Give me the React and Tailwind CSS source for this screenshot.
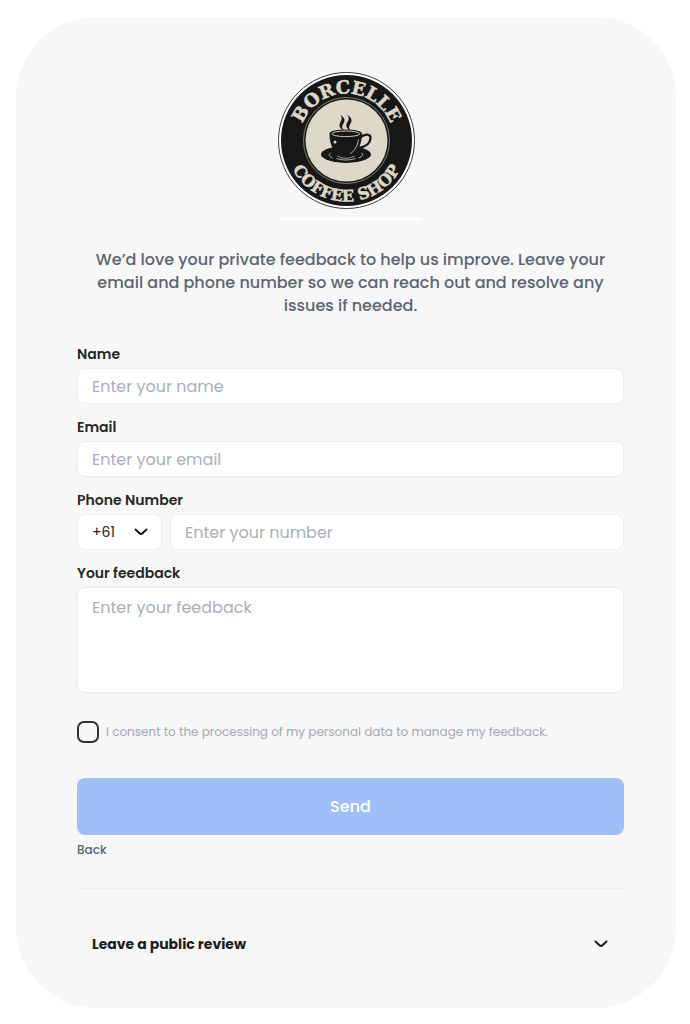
import { useState } from 'react'

const INPUT =
  'block w-full rounded-lg border border-[#ededee] bg-white px-3.5 text-base text-[#262827] placeholder:text-[#a9afb8] outline-none focus:border-[#a0bef8]'

const LABEL = 'block text-sm leading-5 font-semibold text-[#262827]'

function Logo() {
  return (
    <svg className="mx-auto block" width="148" height="150" viewBox="0 0 148 150" role="img" aria-label="Borcelle Coffee Shop">
      <defs>
        <path id="arc-top" d="M22.500 70.500 A47 47 0 0 1 116.500 70.500" />
        <path id="arc-bottom" d="M8.500 70.500 A61 61 0 0 0 130.500 70.500" />
      </defs>
      <circle cx="69.5" cy="70.5" r="68" fill="#fff" stroke="#393939" strokeWidth="1" />
      <circle cx="69.5" cy="70.5" r="65.5" fill="#171717" />
      <circle cx="69.5" cy="70.5" r="43" fill="none" stroke="#aaa698" strokeWidth="0.7" />
      <circle cx="69.5" cy="70.5" r="41" fill="#ded8c9" />

      <g fill="#ded8c9" stroke="#ded8c9" strokeWidth="0.5" fontFamily="'DejaVu Serif', serif" fontWeight="700" textAnchor="middle">
        <text fontSize="18">
          <textPath href="#arc-top" startOffset="50%">BORCELLE</textPath>
        </text>
        <text fontSize="16">
          <textPath href="#arc-bottom" startOffset="50%">COFFEE SHOP</textPath>
        </text>
      </g>

      {/* Steam */}
      <g fill="#171717">
        <path d="M63 44.5 C68 48 68.500 50 66.500 53.500 C64.500 56.500 65 58.500 67.500 61 C62 58 61.500 55.500 63.500 52 C65 49.500 65.500 47.500 63 44.500Z" />
        <path d="M69.500 44.500 C75 47.500 75.500 50.500 73.500 53.500 C71.500 56.500 72 58.500 73 60.500 C68.500 57.500 68.500 55 70.500 52 C72.500 49 72 47 69.500 44.500Z" />
      </g>

      {/* Saucer */}
      <ellipse cx="69" cy="84.500" rx="25" ry="8.500" fill="#171717" />
      <path d="M45.500 87.500 C53.500 95.500 84.500 95.500 92.500 87.500" fill="none" stroke="#ded8c9" strokeWidth="0.8" />
      <path d="M53.500 83 C51 85 52.500 86.500 55.500 88 M84.500 83 C87 84.500 85.500 86.500 81.500 88 M59.500 88.500 C65.500 90.500 72.500 90.500 78.500 88.500" fill="none" stroke="#ded8c9" strokeWidth="0.8" />

      {/* Cup */}
      <path d="M83.500 67.500 C87.500 63.500 94 63.500 93.500 68.500 C93 74 87.500 77 81.500 78" fill="none" stroke="#171717" strokeWidth="2.4" />
      <path d="M52.500 63.500 C52.500 58 85 58 85 63.500 C85 73 81.500 81 76.500 85 C72.500 88.200 64.500 88.200 61 85 C55.500 80 52.500 73 52.500 63.500Z" fill="#171717" />
      <ellipse cx="68.800" cy="63.800" rx="14" ry="2.800" fill="#171717" stroke="#ded8c9" strokeWidth="0.9" />
      <path d="M81.500 69.500 C80.500 76 77.500 81 73.500 83.500" fill="none" stroke="#ded8c9" strokeWidth="0.8" />
      <path d="M60.500 86 C65.500 89 72.500 89 77.500 86" fill="none" stroke="#ded8c9" strokeWidth="0.7" />
      <circle cx="58" cy="72" r="1.500" fill="#ded8c9" />

      <path d="M4 149 H144" stroke="#fff" strokeWidth="2" />
    </svg>
  )
}

function Chevron({ className }) {
  return (
    <svg className={className} width="14" height="8" viewBox="0 0 14 8" fill="none" stroke="#1b1d1c" strokeWidth="2" strokeLinecap="round" strokeLinejoin="round" aria-hidden="true">
      <path d="M1.500 1.500 L5.500 5.200 Q7 6.600 8.500 5.200 L12.500 1.500" />
    </svg>
  )
}

export default function App() {
  const [abierto, setAbierto] = useState(false)

  return (
    <div className="min-h-screen bg-white pt-[17px] pr-3.5 pb-4 pl-4 font-['Poppins','Inter',sans-serif]">
      <main className="rounded-[80px] bg-[#f7f7f7] pt-[53px] pr-[52px] pb-12 pl-[61px]">
        <Logo />

        <p className="mt-7 px-3 text-center text-base leading-[23px] font-medium text-[#5b6472]">
          We’d love your private feedback to help us improve. Leave your email and phone number so we can reach out and resolve any issues if needed.
        </p>

        {/* Form */}
        <form className="mt-[27px]" onSubmit={(e) => e.preventDefault()}>
          <div className="space-y-[13px]">
            <div>
              <label className={LABEL} htmlFor="name">Name</label>
              <input id="name" type="text" placeholder="Enter your name" className={`${INPUT} mt-1 h-9`} />
            </div>

            <div>
              <label className={LABEL} htmlFor="email">Email</label>
              <input id="email" type="email" placeholder="Enter your email" className={`${INPUT} mt-1 h-9`} />
            </div>

            <div>
              <label className={LABEL} htmlFor="phone">Phone Number</label>
              <div className="mt-1 flex gap-2">
                <div className="relative w-[85px] shrink-0">
                  <select aria-label="Country code" className="block h-9 w-full appearance-none rounded-lg border border-[#ededee] bg-white pl-3.5 text-sm text-[#262827] outline-none">
                    <option>+61</option>
                  </select>
                  <Chevron className="pointer-events-none absolute top-3.5 right-3.5" />
                </div>
                <input id="phone" type="tel" placeholder="Enter your number" className={`${INPUT} h-9 min-w-0 flex-1`} />
              </div>
            </div>

            <div>
              <label className={LABEL} htmlFor="feedback">Your feedback</label>
              <textarea id="feedback" placeholder="Enter your feedback" className={`${INPUT} mt-1 h-[106px] resize-none py-2 leading-6`} />
            </div>
          </div>

          <label className="mt-7 flex items-center gap-[7px] text-xs leading-4 text-[#a3a9b2]">
            <input type="checkbox" className="size-[22px] shrink-0 appearance-none rounded-[7px] border-2 border-[#303231] checked:bg-[#303231]" />
            I consent to the processing of my personal data to manage my feedback.
          </label>

          <button type="submit" className="mt-[35px] block h-[57px] w-full rounded-lg bg-[#a0bef8] text-base font-medium text-white">
            Send
          </button>
          <a href="#back" className="mt-[5px] inline-block text-xs leading-5 font-medium text-[#5b6472]">Back</a>
        </form>

        {/* Public review */}
        <div className="mt-[27px] border-t border-[#eeeeef] pt-[39px]">
          <button type="button" aria-expanded={abierto} onClick={() => setAbierto(!abierto)} className="flex w-full items-center justify-between py-1 pr-4 pl-[15px] text-sm leading-6 font-bold text-[#1b1d1c]">
            Leave a public review
            <Chevron className={abierto ? 'rotate-180' : ''} />
          </button>
        </div>
      </main>
    </div>
  )
}
